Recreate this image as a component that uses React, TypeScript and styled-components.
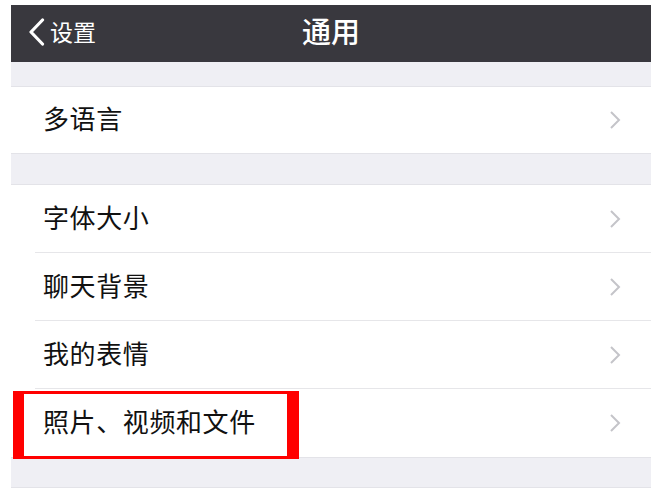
import React from "react";
import styled, { createGlobalStyle } from "styled-components";

const Global = createGlobalStyle`
  html, body { margin: 0; padding: 0; background: #ffffff; }
  body { font-family: "Noto Sans CJK SC", "Noto Sans", sans-serif; }
`;

const Page = styled.div`
  padding: 5px 7px 0 11px;
  width: 640px;
`;

const Screen = styled.div`
  display: flex;
  flex-direction: column;
  background: #efeff4;
`;

const NavBar = styled.div`
  position: relative;
  height: 57px;
  background: #39383e;
  display: flex;
  align-items: center;
  justify-content: center;
`;

const Back = styled.div`
  position: absolute;
  left: 17px;
  top: 0;
  bottom: 4px;
  display: flex;
  align-items: center;
  gap: 5px;
  color: #ffffff;
  font-size: 23px;
  line-height: 1;
`;

const Title = styled.div`
  color: #ffffff;
  font-size: 29px;
  font-weight: 500;
  line-height: 1;
  padding-bottom: 6px;
`;

const Gap = styled.div<{ h: number }>`
  height: ${(p) => p.h}px;
  border-bottom: 1px solid #e3e3e8;
  box-sizing: border-box;
`;

const Group = styled.div`
  background: #ffffff;
  display: flex;
  flex-direction: column;
  border-bottom: 1px solid #e3e3e8;
`;

const Row = styled.div<{ last?: boolean; h?: number }>`
  position: relative;
  height: ${(p) => p.h ?? 68}px;
  box-sizing: border-box;
  display: flex;
  align-items: center;
  padding-left: 32px;
  padding-right: 30px;
  &::after {
    content: "";
    display: ${(p) => (p.last ? "none" : "block")};
    position: absolute;
    left: 24px;
    right: 0;
    bottom: 0;
    height: 1px;
    background: #e6e6e9;
  }
`;

const Label = styled.div`
  flex: 1;
  font-size: 26px;
  letter-spacing: 0.6px;
  line-height: 1;
  padding-bottom: 4px;
  color: #111111;
`;

const Highlight = styled.div`
  position: absolute;
  left: 2px;
  top: 2px;
  width: 286px;
  height: 68px;
  box-sizing: border-box;
  border-style: solid;
  border-color: #ff0000;
  border-width: 3px 12px 3px 11px;
  pointer-events: none;
`;

const Chevron = () => (
  <svg width="12" height="20" viewBox="0 0 12 20">
    <path d="M2 2 L10 10 L2 18" fill="none" stroke="#c4c4c9" strokeWidth="2" />
  </svg>
);

const BackChevron = () => (
  <svg width="17" height="28" viewBox="0 0 17 28">
    <path d="M14.5 2 L3 14 L14.5 26" fill="none" stroke="#ffffff" strokeWidth="3.2" strokeLinecap="round" strokeLinejoin="round" />
  </svg>
);

export default function App() {
  const group2 = ["字体大小", "聊天背景", "我的表情", "照片、视频和文件"];
  return (
    <>
      <Global />
      <Page>
        <Screen>
          <NavBar>
            <Back>
              <BackChevron />
              <span>设置</span>
            </Back>
            <Title>通用</Title>
          </NavBar>
          <Gap h={25} />
          <Group>
            <Row last h={66}>
              <Label>多语言</Label>
              <Chevron />
            </Row>
          </Group>
          <Gap h={31} />
          <Group>
            {group2.map((t, i) => (
              <Row key={t} last={i === group2.length - 1}>
                <Label>{t}</Label>
                <Chevron />
                {i === group2.length - 1 && <Highlight />}
              </Row>
            ))}
          </Group>
          <Gap h={30} />
        </Screen>
      </Page>
    </>
  );
}
